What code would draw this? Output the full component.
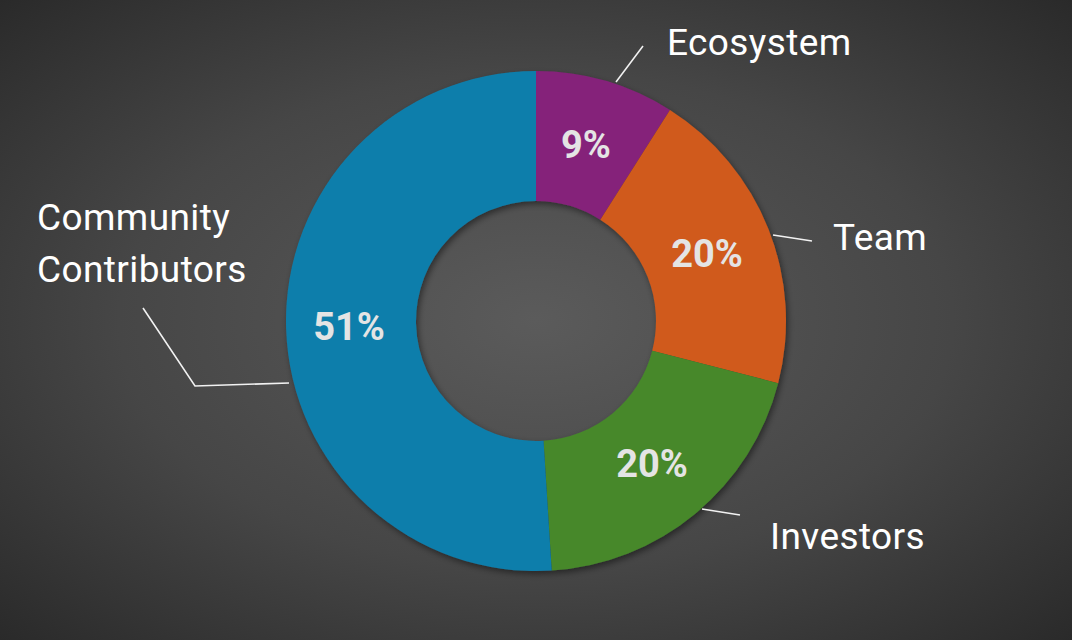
import React from 'react'

const cx = 536
const cy = 321
const R = 250
const r = 120

const slices = [
  { name: 'Ecosystem', value: 9, color: '#85217a' },
  { name: 'Team', value: 20, color: '#d05a1b' },
  { name: 'Investors', value: 20, color: '#46882a' },
  { name: 'Community Contributors', value: 51, color: '#0e7eab' },
]

function pt(deg: number, rad: number) {
  const a = (deg * Math.PI) / 180
  return [cx + rad * Math.sin(a), cy - rad * Math.cos(a)]
}

function arcPath(start: number, end: number) {
  const large = end - start > 180 ? 1 : 0
  const [x1, y1] = pt(start, R)
  const [x2, y2] = pt(end, R)
  const [x3, y3] = pt(end, r)
  const [x4, y4] = pt(start, r)
  return `M${x1} ${y1} A${R} ${R} 0 ${large} 1 ${x2} ${y2} L${x3} ${y3} A${r} ${r} 0 ${large} 0 ${x4} ${y4} Z`
}

const pctLabels = [
  { text: '9%', x: 586, y: 158 },
  { text: '20%', x: 707, y: 267 },
  { text: '20%', x: 652, y: 477 },
  { text: '51%', x: 349, y: 340 },
]

const names = [
  { text: 'Ecosystem', x: 667, y: 55 },
  { text: 'Team', x: 833, y: 250 },
  { text: 'Community', x: 37, y: 230 },
  { text: 'Contributors', x: 37, y: 282 },
  { text: 'Investors', x: 770, y: 549 },
]

export default function App() {
  let acc = 0
  const arcs = slices.map((s) => {
    const start = acc * 3.6
    acc += s.value
    return { ...s, d: arcPath(start, acc * 3.6) }
  })

  return (
    <div className="h-[640px] w-[1072px] overflow-hidden bg-[radial-gradient(ellipse_at_50%_50%,#5b5b5b_0%,#464646_55%,#2a2a2a_100%)]">
      <svg width="1072" height="640" viewBox="0 0 1072 640" className="block">
        <defs>
          <filter id="shadow" x="-10%" y="-10%" width="120%" height="120%">
            <feDropShadow dx="2" dy="3" stdDeviation="3" floodColor="#000" floodOpacity="0.45" />
          </filter>
        </defs>

        {/* donut */}
        <g filter="url(#shadow)">
          {arcs.map((a) => (
            <path key={a.name} d={a.d} fill={a.color} />
          ))}
        </g>

        {/* leader lines */}
        <g stroke="#f2f2f2" strokeWidth="1.6" fill="none">
          <line x1="616" y1="82" x2="643" y2="46" />
          <line x1="773" y1="235" x2="812" y2="241" />
          <polyline points="143,308 195,386 289,383" />
          <line x1="702" y1="509" x2="740" y2="515" />
        </g>

        {/* percentages */}
        <g fill="#e4e4e4" fontFamily="Roboto, 'Liberation Sans', sans-serif" fontWeight="700" fontSize="38" textAnchor="middle">
          {pctLabels.map((p, i) => (
            <text key={i} x={p.x} y={p.y}>
              {p.text}
            </text>
          ))}
        </g>

        {/* category names */}
        <g fill="#ffffff" fontFamily="Roboto, 'Liberation Sans', sans-serif" fontSize="37" letterSpacing="0.4">
          {names.map((n) => (
            <text key={n.text} x={n.x} y={n.y}>
              {n.text}
            </text>
          ))}
        </g>
      </svg>
    </div>
  )
}
